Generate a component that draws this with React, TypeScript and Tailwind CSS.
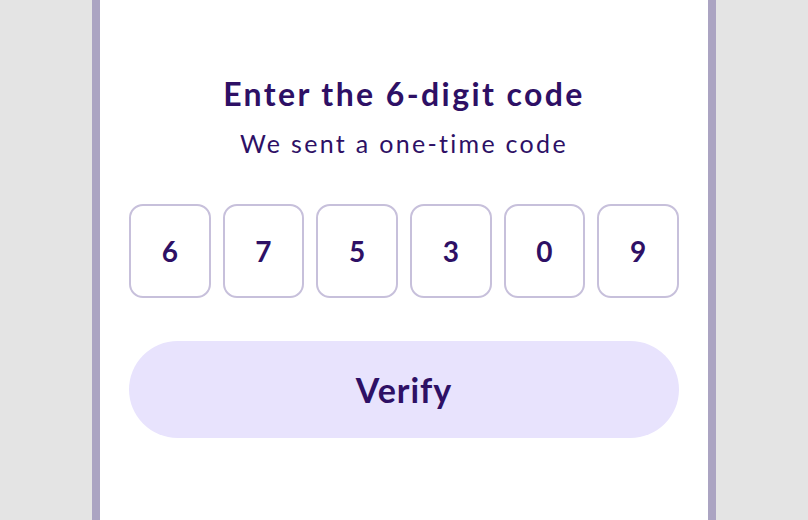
const digits = ['6', '7', '5', '3', '0', '9']

function CodeBox({ value }: { value: string }) {
  return (
    <div className="flex h-[94px] items-center justify-center rounded-[14px] border-[2.5px] border-[#c7c0db] bg-white text-[28px] font-bold text-[#2e1065]">
      {value}
    </div>
  )
}

export default function App() {
  return (
    <div
      className="flex h-[520px] w-full justify-center overflow-hidden bg-[#e4e4e4]"
      style={{ fontFamily: 'Lato, "Noto Sans", sans-serif' }}
    >
      <div className="flex w-[624px] flex-col items-center border-x-8 border-[#aba4c2] bg-white px-[29px] pt-[74px]">
        {/* heading */}
        <h1 className="text-[32px] leading-[40px] font-bold tracking-[2.4px] text-[#2e1065]">Enter the 6-digit code</h1>
        <p className="mt-[15px] text-[25px] leading-[28px] tracking-[2.3px] text-[#2e1065]">We sent a one-time code</p>

        {/* code inputs */}
        <div className="mt-[47px] grid w-full grid-cols-6 gap-3">
          {digits.map((d, i) => (
            <CodeBox key={i} value={d} />
          ))}
        </div>

        <button className="mt-[43px] h-[97px] w-full rounded-full bg-[#e8e3fd] text-[34px] font-bold tracking-[1px] text-[#2e1065]">
          Verify
        </button>
      </div>
    </div>
  )
}
